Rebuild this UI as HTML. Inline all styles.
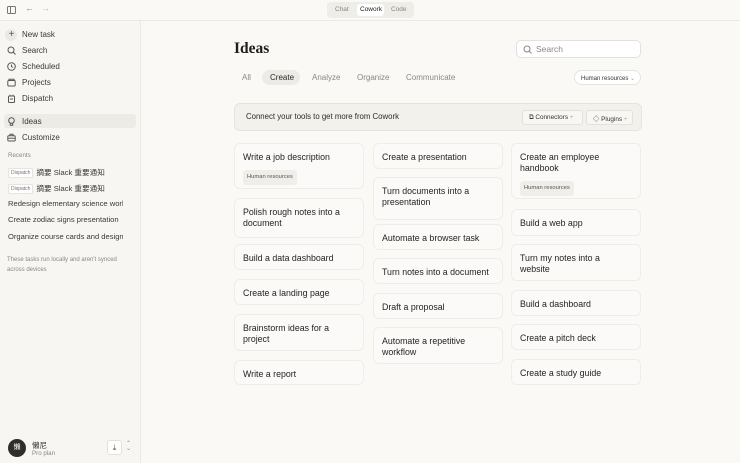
<!DOCTYPE html>
<html><head><meta charset="utf-8"><style>
*{box-sizing:border-box;margin:0;padding:0}
body{width:740px;height:463px;overflow:hidden;background:#faf9f6;font-family:"Liberation Sans","Noto Sans CJK SC",sans-serif;color:#2b2a27;position:relative}
.a{position:absolute}
.top{left:0;top:0;width:740px;height:21px;border-bottom:1px solid #ebe9e4;background:#faf9f6}
.side{left:0;top:21px;width:141px;height:442px;background:#f7f6f2;border-right:1px solid #ebe9e4}
.ni{position:absolute;left:7px;font-size:8px;color:#3a3936;display:flex;align-items:center;gap:6px}
.ni svg{width:9px;height:9px}
.rec{position:absolute;left:8px;font-size:7.6px;color:#3a3936;white-space:nowrap;width:115px;overflow:hidden}
.tag{display:inline-block;font-size:5px;color:#777;border:1px solid #e6e4de;background:#fff;padding:1px 2px;border-radius:2px;margin-right:3px;vertical-align:1px}
.card{position:absolute;width:130px;background:#fbfaf8;border:1px solid #efede8;border-radius:6px;padding:0 8px;font-size:8.8px;color:#242321;line-height:11px}
.card .t{margin-top:8px}
.pill{display:inline-block;font-size:5.8px;color:#555;background:#f0eee9;border-radius:3px;padding:2px 4px;margin-top:7px}
.tab{position:absolute;top:73px;font-size:8px;color:#8a8883}
</style></head><body>
<div class="a top"></div>
<svg class="a" style="left:7px;top:6px" width="9" height="8" viewBox="0 0 9 8"><rect x=".5" y=".5" width="8" height="7" rx="1" fill="none" stroke="#777"/><line x1="3.5" y1=".5" x2="3.5" y2="7.5" stroke="#777"/></svg>
<div class="a" style="left:25px;top:3px;font-size:9px;color:#888">←</div>
<div class="a" style="left:41px;top:3px;font-size:9px;color:#bbb">→</div>
<div class="a" style="left:327px;top:2px;width:87px;height:16px;background:#efede8;border-radius:4px"></div>
<div class="a" style="left:357px;top:4px;width:27px;height:12px;background:#fff;border-radius:3px"></div>
<div class="a" style="left:335px;top:6px;font-size:6.5px;color:#8a8883">Chat</div>
<div class="a" style="left:360px;top:6px;font-size:6.5px;color:#222">Cowork</div>
<div class="a" style="left:391px;top:6px;font-size:6.5px;color:#8a8883">Code</div>

<div class="a side"></div>
<div class="a" style="left:5px;top:29px;width:12px;height:12px;border-radius:50%;background:#ebe9e4"></div>
<div class="ni" style="top:30px"><span style="width:9px;text-align:center;font-size:10px;color:#555;line-height:9px">+</span>New task</div>
<div class="ni" style="top:46px"><svg viewBox="0 0 9 9"><circle cx="4" cy="4" r="3" fill="none" stroke="#555"/><line x1="6.2" y1="6.2" x2="8.5" y2="8.5" stroke="#555"/></svg>Search</div>
<div class="ni" style="top:62px"><svg viewBox="0 0 9 9"><circle cx="4.5" cy="4.5" r="3.8" fill="none" stroke="#555"/><path d="M4.5 2.5V4.5L6 5.5" fill="none" stroke="#555"/></svg>Scheduled</div>
<div class="ni" style="top:78px"><svg viewBox="0 0 9 9"><rect x=".8" y="2.5" width="7.4" height="5.5" rx="1" fill="none" stroke="#555"/><path d="M2 2.5V1.2H7V2.5" fill="none" stroke="#555"/></svg>Projects</div>
<div class="ni" style="top:94px"><svg viewBox="0 0 9 9"><rect x="1.5" y="2" width="6" height="6.5" rx="1" fill="none" stroke="#555"/><path d="M3 2V.8M6 2V.8M3 5h3" stroke="#555"/></svg>Dispatch</div>
<div class="a" style="left:4px;top:114px;width:132px;height:14px;background:#ecebe5;border-radius:3px"></div>
<div class="ni" style="top:117px"><svg viewBox="0 0 9 9"><circle cx="4.5" cy="3.5" r="2.8" fill="none" stroke="#555"/><path d="M3.3 6.5V8.3H5.7V6.5" fill="none" stroke="#555"/></svg>Ideas</div>
<div class="ni" style="top:133px"><svg viewBox="0 0 9 9"><rect x=".8" y="2.8" width="7.4" height="5.2" rx="1" fill="none" stroke="#555"/><path d="M3 2.8V1.3H6V2.8M.8 5.3H8.2" fill="none" stroke="#555"/></svg>Customize</div>
<div class="a" style="left:8px;top:152px;font-size:6.2px;color:#8a8883">Recents</div>
<div class="rec" style="top:167px"><span class="tag">Dispatch</span>摘要 Slack 重要通知</div>
<div class="rec" style="top:183px"><span class="tag">Dispatch</span>摘要 Slack 重要通知</div>
<div class="rec" style="top:199px">Redesign elementary science work</div>
<div class="rec" style="top:215px">Create zodiac signs presentation</div>
<div class="rec" style="top:232px">Organize course cards and design c</div>
<div class="a" style="left:7px;top:256px;font-size:6px;line-height:9.5px;color:#8a8883;width:125px">These tasks run locally and aren't synced across devices</div>
<div class="a" style="left:8px;top:439px;width:18px;height:18px;border-radius:50%;background:#2f2e2b;color:#fff;font-size:7px;text-align:center;line-height:18px">懶</div>
<div class="a" style="left:32px;top:440px;font-size:7.5px;color:#333">懶尼</div>
<div class="a" style="left:32px;top:450px;font-size:6.2px;color:#888">Pro plan</div>
<div class="a" style="left:107px;top:440px;width:15px;height:15px;border:1px solid #e3e1dc;border-radius:3px;background:#fff;font-size:8px;text-align:center;line-height:13px;color:#555">⤓</div>
<div class="a" style="left:126px;top:442px;font-size:6px;color:#888;line-height:5px">⌃<br>⌄</div>

<div class="a" style="left:234px;top:40px;font-family:'Liberation Serif',serif;font-size:15.5px;font-weight:bold;color:#1f1e1c">Ideas</div>
<div class="a" style="left:516px;top:40px;width:125px;height:18px;border:1px solid #e3e1dc;border-radius:5px;background:#fff"></div>
<svg class="a" style="left:523px;top:45px" width="9" height="9" viewBox="0 0 9 9"><circle cx="4" cy="4" r="3" fill="none" stroke="#888"/><line x1="6.2" y1="6.2" x2="8.5" y2="8.5" stroke="#888"/></svg>
<div class="a" style="left:536px;top:44px;font-size:8.5px;color:#8a8883">Search</div>
<div class="tab" style="left:242px">All</div>
<div class="a" style="left:262px;top:70px;width:38px;height:15px;background:#ecebe5;border-radius:8px"></div>
<div class="tab" style="left:270px;color:#2b2a27">Create</div>
<div class="tab" style="left:312px">Analyze</div>
<div class="tab" style="left:357px">Organize</div>
<div class="tab" style="left:406px">Communicate</div>
<div class="a" style="left:574px;top:70px;width:67px;height:15px;border:1px solid #e6e4de;border-radius:8px;background:#fff;font-size:6px;color:#333;padding:3.5px 0 0 6px;white-space:nowrap">Human resources <span style="color:#999">⌄</span></div>
<div class="a" style="left:234px;top:103px;width:408px;height:28px;background:#f2f1ec;border:1px solid #e6e4de;border-radius:6px"></div>
<div class="a" style="left:246px;top:112px;font-size:7.8px;color:#2b2a27">Connect your tools to get more from Cowork</div>
<div class="a" style="left:522px;top:110px;width:61px;height:15px;border:1px solid #e3e1dc;border-radius:3px;background:#f8f7f3;font-size:6.4px;padding:3px 0 0 6px;color:#333;white-space:nowrap">⧉ Connectors <span style="color:#aaa">+</span></div>
<div class="a" style="left:586px;top:110px;width:47px;height:15px;border:1px solid #e3e1dc;border-radius:3px;background:#f8f7f3;font-size:6.4px;padding:3px 0 0 6px;color:#333;white-space:nowrap">◇ Plugins <span style="color:#aaa">+</span></div>

<div class="card" style="left:234px;top:143px;height:46px"><div class="t">Write a job description</div><span class="pill">Human resources</span></div>
<div class="card" style="left:234px;top:198px;height:40px"><div class="t">Polish rough notes into a document</div></div>
<div class="card" style="left:234px;top:244px;height:26px"><div class="t">Build a data dashboard</div></div>
<div class="card" style="left:234px;top:279px;height:26px"><div class="t">Create a landing page</div></div>
<div class="card" style="left:234px;top:314px;height:37px"><div class="t">Brainstorm ideas for a project</div></div>
<div class="card" style="left:234px;top:360px;height:25px"><div class="t">Write a report</div></div>

<div class="card" style="left:373px;top:143px;height:26px"><div class="t">Create a presentation</div></div>
<div class="card" style="left:373px;top:177px;height:43px"><div class="t">Turn documents into a presentation</div></div>
<div class="card" style="left:373px;top:224px;height:26px"><div class="t">Automate a browser task</div></div>
<div class="card" style="left:373px;top:258px;height:26px"><div class="t">Turn notes into a document</div></div>
<div class="card" style="left:373px;top:293px;height:26px"><div class="t">Draft a proposal</div></div>
<div class="card" style="left:373px;top:327px;height:37px"><div class="t">Automate a repetitive workflow</div></div>

<div class="card" style="left:511px;top:143px;height:56px"><div class="t">Create an employee handbook</div><span class="pill">Human resources</span></div>
<div class="card" style="left:511px;top:209px;height:27px"><div class="t">Build a web app</div></div>
<div class="card" style="left:511px;top:244px;height:37px"><div class="t">Turn my notes into a website</div></div>
<div class="card" style="left:511px;top:290px;height:26px"><div class="t">Build a dashboard</div></div>
<div class="card" style="left:511px;top:324px;height:26px"><div class="t">Create a pitch deck</div></div>
<div class="card" style="left:511px;top:359px;height:26px"><div class="t">Create a study guide</div></div>
</body></html>
